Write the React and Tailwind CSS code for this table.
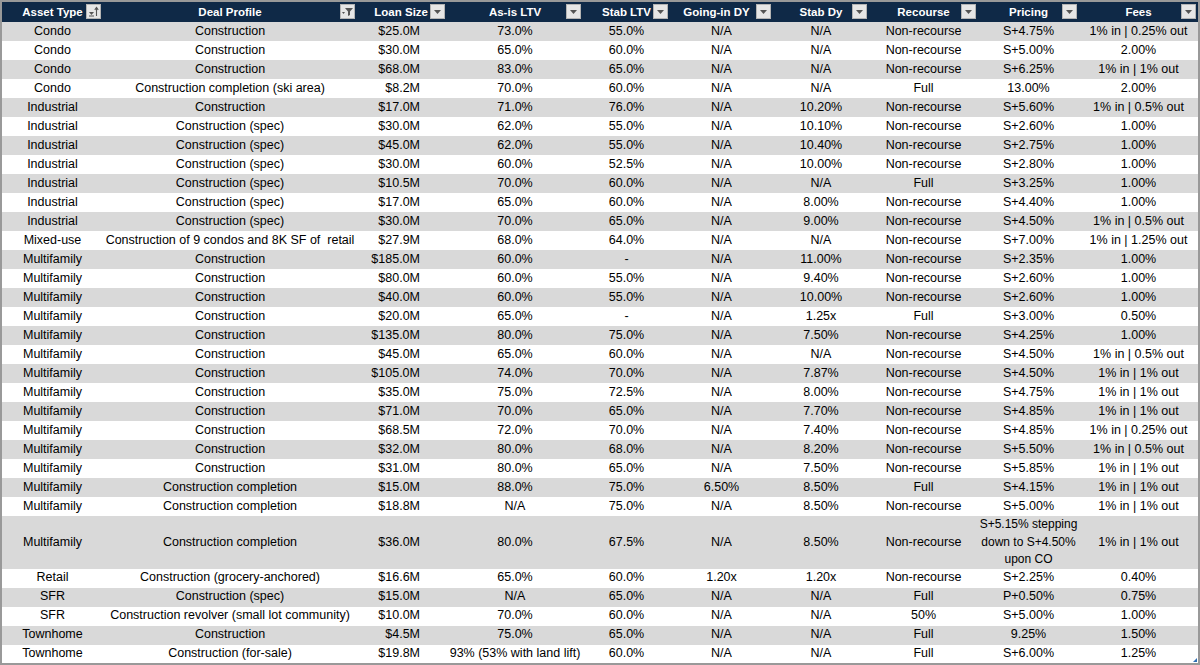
import React from 'react'

const cols = [
    { label: "Asset Type", w: 101, icon: "sort" },
    { label: "Deal Profile", w: 254, icon: "funnel" },
    { label: "Loan Size", w: 90, icon: "drop", right: true },
    { label: "As-is LTV", w: 136, icon: "drop" },
    { label: "Stab LTV", w: 87, icon: "drop" },
    { label: "Going-in DY", w: 103, icon: "drop" },
    { label: "Stab Dy", w: 96, icon: "drop" },
    { label: "Recourse", w: 109, icon: "drop" },
    { label: "Pricing", w: 101, icon: "drop" },
    { label: "Fees", w: 119, icon: "drop" },
]

const rows = [
    ["Condo", "Construction", "$25.0M", "73.0%", "55.0%", "N/A", "N/A", "Non-recourse", "S+4.75%", "1% in | 0.25% out"],
    ["Condo", "Construction", "$30.0M", "65.0%", "60.0%", "N/A", "N/A", "Non-recourse", "S+5.00%", "2.00%"],
    ["Condo", "Construction", "$68.0M", "83.0%", "65.0%", "N/A", "N/A", "Non-recourse", "S+6.25%", "1% in | 1% out"],
    ["Condo", "Construction completion (ski area)", "$8.2M", "70.0%", "60.0%", "N/A", "N/A", "Full", "13.00%", "2.00%"],
    ["Industrial", "Construction", "$17.0M", "71.0%", "76.0%", "N/A", "10.20%", "Non-recourse", "S+5.60%", "1% in | 0.5% out"],
    ["Industrial", "Construction (spec)", "$30.0M", "62.0%", "55.0%", "N/A", "10.10%", "Non-recourse", "S+2.60%", "1.00%"],
    ["Industrial", "Construction (spec)", "$45.0M", "62.0%", "55.0%", "N/A", "10.40%", "Non-recourse", "S+2.75%", "1.00%"],
    ["Industrial", "Construction (spec)", "$30.0M", "60.0%", "52.5%", "N/A", "10.00%", "Non-recourse", "S+2.80%", "1.00%"],
    ["Industrial", "Construction (spec)", "$10.5M", "70.0%", "60.0%", "N/A", "N/A", "Full", "S+3.25%", "1.00%"],
    ["Industrial", "Construction (spec)", "$17.0M", "65.0%", "60.0%", "N/A", "8.00%", "Non-recourse", "S+4.40%", "1.00%"],
    ["Industrial", "Construction (spec)", "$30.0M", "70.0%", "65.0%", "N/A", "9.00%", "Non-recourse", "S+4.50%", "1% in | 0.5% out"],
    ["Mixed-use", "Construction of 9 condos and 8K SF of  retail", "$27.9M", "68.0%", "64.0%", "N/A", "N/A", "Non-recourse", "S+7.00%", "1% in | 1.25% out"],
    ["Multifamily", "Construction", "$185.0M", "60.0%", "-", "N/A", "11.00%", "Non-recourse", "S+2.35%", "1.00%"],
    ["Multifamily", "Construction", "$80.0M", "60.0%", "55.0%", "N/A", "9.40%", "Non-recourse", "S+2.60%", "1.00%"],
    ["Multifamily", "Construction", "$40.0M", "60.0%", "55.0%", "N/A", "10.00%", "Non-recourse", "S+2.60%", "1.00%"],
    ["Multifamily", "Construction", "$20.0M", "65.0%", "-", "N/A", "1.25x", "Full", "S+3.00%", "0.50%"],
    ["Multifamily", "Construction", "$135.0M", "80.0%", "75.0%", "N/A", "7.50%", "Non-recourse", "S+4.25%", "1.00%"],
    ["Multifamily", "Construction", "$45.0M", "65.0%", "60.0%", "N/A", "N/A", "Non-recourse", "S+4.50%", "1% in | 0.5% out"],
    ["Multifamily", "Construction", "$105.0M", "74.0%", "70.0%", "N/A", "7.87%", "Non-recourse", "S+4.50%", "1% in | 1% out"],
    ["Multifamily", "Construction", "$35.0M", "75.0%", "72.5%", "N/A", "8.00%", "Non-recourse", "S+4.75%", "1% in | 1% out"],
    ["Multifamily", "Construction", "$71.0M", "70.0%", "65.0%", "N/A", "7.70%", "Non-recourse", "S+4.85%", "1% in | 1% out"],
    ["Multifamily", "Construction", "$68.5M", "72.0%", "70.0%", "N/A", "7.40%", "Non-recourse", "S+4.85%", "1% in | 0.25% out"],
    ["Multifamily", "Construction", "$32.0M", "80.0%", "68.0%", "N/A", "8.20%", "Non-recourse", "S+5.50%", "1% in | 0.5% out"],
    ["Multifamily", "Construction", "$31.0M", "80.0%", "65.0%", "N/A", "7.50%", "Non-recourse", "S+5.85%", "1% in | 1% out"],
    ["Multifamily", "Construction completion", "$15.0M", "88.0%", "75.0%", "6.50%", "8.50%", "Full", "S+4.15%", "1% in | 1% out"],
    ["Multifamily", "Construction completion", "$18.8M", "N/A", "75.0%", "N/A", "8.50%", "Non-recourse", "S+5.00%", "1% in | 1% out"],
    ["Multifamily", "Construction completion", "$36.0M", "80.0%", "67.5%", "N/A", "8.50%", "Non-recourse", "S+5.15% stepping\ndown to S+4.50%\nupon CO", "1% in | 1% out"],
    ["Retail", "Construction (grocery-anchored)", "$16.6M", "65.0%", "60.0%", "1.20x", "1.20x", "Non-recourse", "S+2.25%", "0.40%"],
    ["SFR", "Construction (spec)", "$15.0M", "N/A", "65.0%", "N/A", "N/A", "Full", "P+0.50%", "0.75%"],
    ["SFR", "Construction revolver (small lot community)", "$10.0M", "70.0%", "60.0%", "N/A", "N/A", "50%", "S+5.00%", "1.00%"],
    ["Townhome", "Construction", "$4.5M", "75.0%", "65.0%", "N/A", "N/A", "Full", "9.25%", "1.50%"],
    ["Townhome", "Construction (for-sale)", "$19.8M", "93% (53% with land lift)", "60.0%", "N/A", "N/A", "Full", "S+6.00%", "1.25%"],
]

function FilterButton({ icon }) {
    return (
        <span className="absolute right-[2px] top-[2px] w-[15px] h-[15px] bg-[#e6e6e6] border border-[#b4b4b4] flex items-center justify-center">
            {icon === "drop" && (
                <svg width="7" height="4" viewBox="0 0 7 4"><path d="M0 0h7L3.5 4z" fill="#555" /></svg>
            )}
            {icon === "sort" && (
                <svg width="11" height="11" viewBox="0 0 11 11">
                    <path d="M1 6h5L3.5 9z" fill="#555" />
                    <path d="M1 10h5" stroke="#555" strokeWidth="1" />
                    <path d="M8.5 10V2M6.8 3.8L8.5 1.5l1.7 2.3" stroke="#555" strokeWidth="1.1" fill="none" />
                </svg>
            )}
            {icon === "funnel" && (
                <svg width="11" height="11" viewBox="0 0 11 11">
                    <path d="M3 2h8L8 5.5V9L6 10V5.5z" fill="#555" />
                    <path d="M0 6h3L1.5 8z" fill="#555" />
                </svg>
            )}
        </span>
    )
}

function App() {
    return (
        <div className="w-[1200px] h-[665px] bg-white border-2 border-[#999999] overflow-hidden relative" style={{ fontFamily: '"Liberation Sans", Arial, sans-serif' }}>
            <table className="table-fixed border-collapse w-[1196px] text-[12.5px] text-black">
                <colgroup>
                    {cols.map(c => <col key={c.label} style={{ width: c.w }} />)}
                </colgroup>
                <thead>
                    <tr className="h-[20px] bg-[#0f2947]">
                        {cols.map(c => (
                            <th key={c.label} className="relative p-0 text-white font-bold text-[11.5px] text-center leading-[20px] whitespace-nowrap">
                                <span className={c.right ? "block text-right pr-[19px]" : c.label === "Going-in DY" ? "block pr-[10px]" : ""}>{c.label}</span>
                                <FilterButton icon={c.icon} />
                            </th>
                        ))}
                    </tr>
                </thead>
                <tbody>
                    {rows.map((r, i) => (
                        <tr key={i} className={(i % 2 === 0 ? "bg-[#d9d9d9]" : "bg-white") + (i === 26 ? " h-[52px]" : " h-[19px]")}>
                            {r.map((v, j) => (
                                <td key={j} className={"p-0 leading-[17.5px] whitespace-pre " + (j === 2 ? "text-right pr-[27px]" : "text-center") + (j === 8 && i === 26 ? " text-[12px]" : "")}>
                                    {v}
                                </td>
                            ))}
                        </tr>
                    ))}
                </tbody>
            </table>
            <span className="absolute right-[1px] bottom-[1px] w-0 h-0 border-l-[4px] border-l-transparent border-b-[4px] border-b-[#2f6fb5]" />
        </div>
    )
}

export default App
